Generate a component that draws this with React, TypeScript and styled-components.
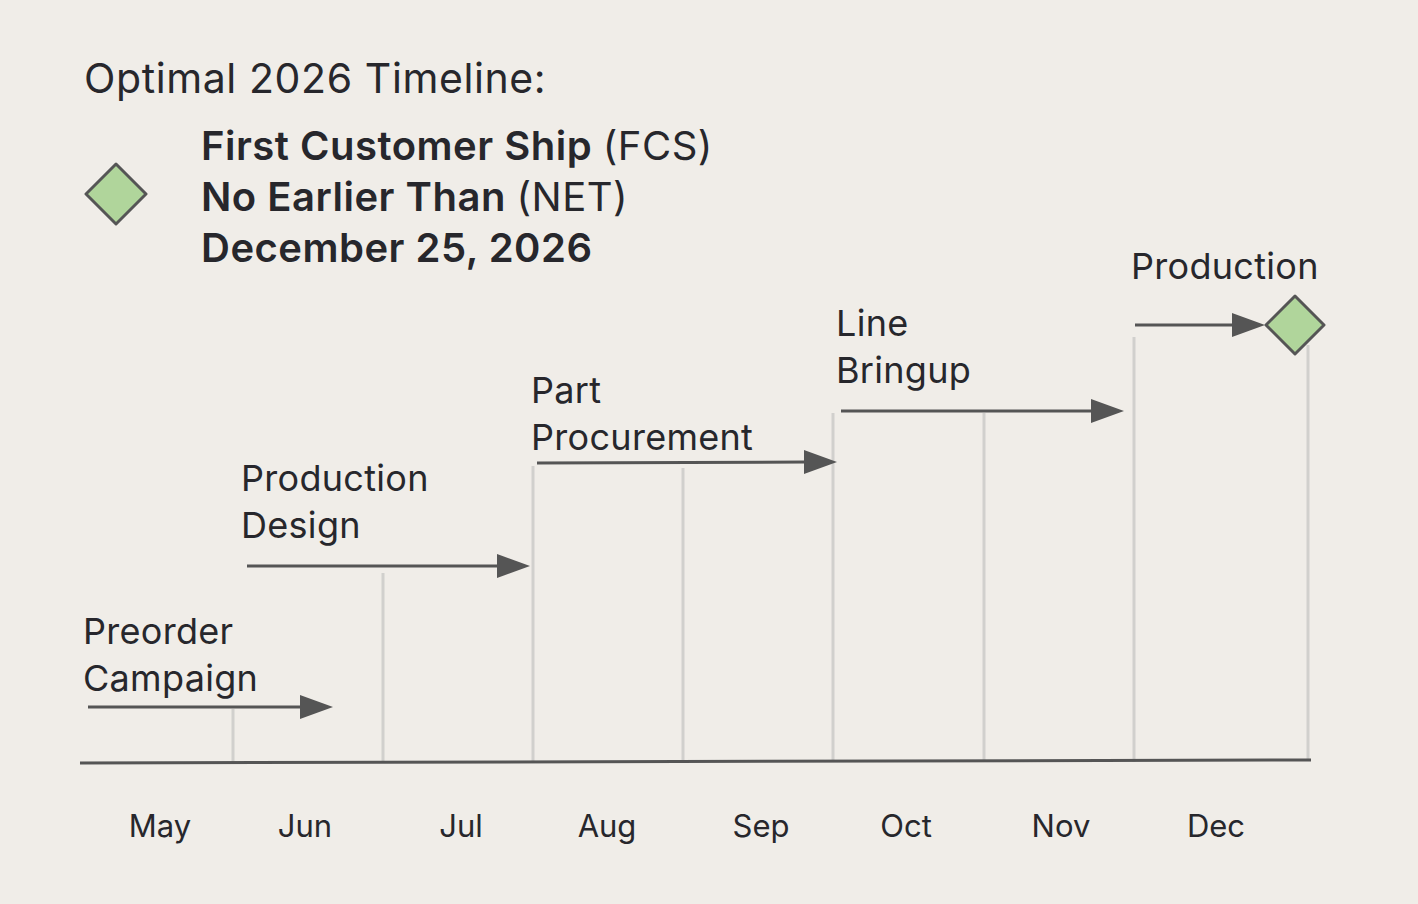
import * as React from "react";
import styled, { createGlobalStyle } from "styled-components";

const INK = "#27272c";
const LINE = "#555555";
const GRID = "#d1d0cd";
const GREEN = "#b0d59b";

const GlobalStyle = createGlobalStyle`
  html, body {
    margin: 0;
    padding: 0;
    background: #f0ede8;
  }
  body {
    font-family: Inter, "Open Sans", sans-serif;
    color: ${INK};
  }
`;

const Page = styled.div`
  display: grid;
  grid-template-areas: "stack";
  width: 1418px;
  height: 904px;
  overflow: hidden;
  background: #f0ede8;
`;

const Header = styled.header`
  grid-area: stack;
  z-index: 1;
  display: flex;
  flex-direction: column;
  gap: 18px;
  padding: 54px 0 0 84px;
  align-self: start;
`;

const Title = styled.h1`
  margin: 0;
  font-size: 41px;
  line-height: 48px;
  font-weight: 400;
  letter-spacing: 0.6px;
`;

const Legend = styled.div`
  display: flex;
  align-items: center;
`;

const LegendMark = styled.div`
  width: 117px;
  display: flex;
  margin-top: -6px;
`;

const LegendText = styled.div`
  display: flex;
  flex-direction: column;
`;

const LegendLine = styled.div`
  font-size: 40px;
  line-height: 51px;
  font-weight: 600;
  letter-spacing: 0.5px;
  white-space: nowrap;
`;

const Light = styled.span`
  font-weight: 400;
`;

const Chart = styled.div`
  grid-area: stack;
  position: relative;
  width: 1418px;
  height: 904px;
`;

const Canvas = styled.svg`
  position: absolute;
  inset: 0;
`;

const PhaseLabel = styled.div<{ $x: number; $y: number }>`
  position: absolute;
  left: ${({ $x }) => $x}px;
  top: ${({ $y }) => $y}px;
  font-size: 36px;
  line-height: 47px;
  font-weight: 400;
  letter-spacing: 0.3px;
  white-space: pre;
`;

const MonthLabel = styled.div<{ $x: number }>`
  position: absolute;
  left: ${({ $x }) => $x}px;
  top: 806px;
  transform: translateX(-50%);
  font-size: 31px;
  line-height: 40px;
  font-weight: 400;
`;

function Diamond({ size = 64 }: { size?: number }) {
  return (
    <svg width={size} height={size} viewBox="0 0 64 64">
      <polygon
        points="32,2 62,32 32,62 2,32"
        fill={GREEN}
        stroke={LINE}
        strokeWidth={3}
        strokeLinejoin="round"
      />
    </svg>
  );
}

const gridLines = [
  { x: 233, top: 709, bottom: 763 },
  { x: 383, top: 573, bottom: 763 },
  { x: 533, top: 466, bottom: 763 },
  { x: 683, top: 468, bottom: 763 },
  { x: 833, top: 413, bottom: 762 },
  { x: 984, top: 413, bottom: 762 },
  { x: 1134, top: 337, bottom: 762 },
  { x: 1308, top: 345, bottom: 761 },
];

const arrows = [
  { x1: 88, y1: 707, x2: 333, y2: 707 },
  { x1: 247, y1: 566, x2: 530, y2: 566 },
  { x1: 537, y1: 463, x2: 837, y2: 462 },
  { x1: 841, y1: 411, x2: 1124, y2: 411 },
  { x1: 1135, y1: 325, x2: 1265, y2: 325 },
];

const phases = [
  { text: "Preorder\nCampaign", x: 83, y: 608 },
  { text: "Production\nDesign", x: 241, y: 455 },
  { text: "Part\nProcurement", x: 531, y: 367 },
  { text: "Line\nBringup", x: 836, y: 300 },
  { text: "Production", x: 1131, y: 243 },
];

const months = [
  { name: "May", x: 160 },
  { name: "Jun", x: 305 },
  { name: "Jul", x: 461 },
  { name: "Aug", x: 607 },
  { name: "Sep", x: 761 },
  { name: "Oct", x: 906 },
  { name: "Nov", x: 1061 },
  { name: "Dec", x: 1216 },
];

function Arrow({ x1, y1, x2, y2 }: { x1: number; y1: number; x2: number; y2: number }) {
  const head = 33;
  return (
    <g>
      <line x1={x1} y1={y1} x2={x2 - head + 2} y2={y2} stroke={LINE} strokeWidth={3} />
      <polygon points={`${x2 - head},${y2 - 12} ${x2},${y2} ${x2 - head},${y2 + 12}`} fill={LINE} />
    </g>
  );
}

export default function App() {
  return (
    <>
      <GlobalStyle />
      <Page>
        <Chart>
          <Canvas width={1418} height={904} viewBox="0 0 1418 904">
            {gridLines.map((g) => (
              <line key={g.x} x1={g.x} y1={g.top} x2={g.x} y2={g.bottom} stroke={GRID} strokeWidth={3} />
            ))}
            <line x1={80} y1={763} x2={1311} y2={760} stroke={LINE} strokeWidth={3} />
            {arrows.map((a, i) => (
              <Arrow key={i} {...a} />
            ))}
            <polygon
              points="1295,296 1324,325 1295,354 1266,325"
              fill={GREEN}
              stroke={LINE}
              strokeWidth={3}
              strokeLinejoin="round"
            />
          </Canvas>
          {phases.map((p) => (
            <PhaseLabel key={p.text} $x={p.x} $y={p.y}>
              {p.text}
            </PhaseLabel>
          ))}
          {months.map((m) => (
            <MonthLabel key={m.name} $x={m.x}>
              {m.name}
            </MonthLabel>
          ))}
        </Chart>
        <Header>
          <Title>Optimal 2026 Timeline:</Title>
          <Legend>
            <LegendMark>
              <Diamond />
            </LegendMark>
            <LegendText>
              <LegendLine>
                First Customer Ship <Light>(FCS)</Light>
              </LegendLine>
              <LegendLine>
                No Earlier Than <Light>(NET)</Light>
              </LegendLine>
              <LegendLine>December 25, 2026</LegendLine>
            </LegendText>
          </Legend>
        </Header>
      </Page>
    </>
  );
}
